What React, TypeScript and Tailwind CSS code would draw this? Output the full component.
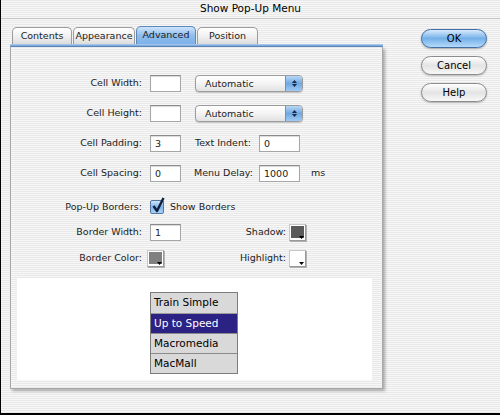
import React from 'react';

// pinstripe background used by the window and the panel
const stripes =
  'bg-[repeating-linear-gradient(180deg,#e9e9e9_0px,#e9e9e9_1px,#f7f7f7_1px,#f7f7f7_2px)]';

const tabs = [
  { label: 'Contents', w: 'w-[60px]' },
  { label: 'Appearance', w: 'w-[62px]' },
  { label: 'Advanced', w: 'w-[60px]', active: true },
  { label: 'Position', w: 'w-[61px]' },
];

const menuItems = ['Train Simple', 'Up to Speed', 'Macromedia', 'MacMall'];

function Field({ value = '', w = 'w-[31px]' }: { value?: string; w?: string }) {
  return (
    <div
      className={`${w} h-[17px] bg-white border border-[#a6a6a6] border-t-[#8a8a8a] shadow-[inset_0_1px_1px_rgba(0,0,0,0.15)] pl-[4px] leading-[15px] text-[9.5px]`}
    >
      {value}
    </div>
  );
}

function Select({ value }: { value: string }) {
  return (
    <div className="w-[108px] h-[17px] flex rounded-[4px] border border-[#9c9c9c] bg-gradient-to-b from-white via-[#f4f4f4] to-[#e2e2e2] shadow-[0_1px_1px_rgba(0,0,0,0.2)] overflow-hidden">
      <div className="flex-1 pl-[9px] leading-[15px]">{value}</div>
      <div className="w-[17px] flex flex-col items-center justify-center gap-[1px] bg-gradient-to-b from-[#b9d8f6] via-[#6ea8e3] to-[#9fcaf3] border-l border-[#6b93c2]">
        <svg width="5" height="3" viewBox="0 0 5 3">
          <path d="M0 3 L2.5 0 L5 3 Z" fill="#1a2a44" />
        </svg>
        <svg width="5" height="3" viewBox="0 0 5 3">
          <path d="M0 0 L2.5 3 L5 0 Z" fill="#1a2a44" />
        </svg>
      </div>
    </div>
  );
}

function Swatch({ color }: { color: string }) {
  return (
    <div className="relative w-[17px] h-[17px] bg-white border border-[#9a9a9a] border-t-[#c8c8c8] border-l-[#c8c8c8] shadow-[1px_1px_0_rgba(0,0,0,0.25)]">
      <div className={`absolute left-[1px] top-[1px] w-[13px] h-[12px] ${color}`} />
      <svg className="absolute right-[1px] bottom-[1px]" width="5" height="3" viewBox="0 0 5 3">
        <path d="M0 0 L2.5 3 L5 0 Z" fill="#000" />
      </svg>
    </div>
  );
}

function Label({ children, w = 'w-[131px]' }: { children: React.ReactNode; w?: string }) {
  return <div className={`${w} text-right shrink-0`}>{children}</div>;
}

function AquaButton({ children, primary }: { children: React.ReactNode; primary?: boolean }) {
  return (
    <div
      className={
        primary
          ? 'w-[66px] h-[19px] rounded-full border border-[#3f6ea6] bg-gradient-to-b from-[#d8ebfc] via-[#74b0e8] to-[#b4dafa] shadow-[0_1px_2px_rgba(0,0,0,0.3)] flex items-center justify-center text-[10px] text-black'
          : 'w-[66px] h-[19px] rounded-full border border-[#8c8c8c] bg-gradient-to-b from-white via-[#e4e4e4] to-[#f7f7f7] shadow-[0_1px_2px_rgba(0,0,0,0.25)] flex items-center justify-center text-[10px] text-black'
      }
    >
      {children}
    </div>
  );
}

export default function App() {
  return (
    <div
      className={`w-[500px] h-[415px] overflow-hidden flex flex-col border-l border-b-2 border-black ${stripes} font-['DejaVu_Sans',sans-serif] text-[9.5px] text-[#1c1c1c]`}
    >
      {/* title bar */}
      <div className="h-[19px] shrink-0 flex items-center justify-center text-[10.5px] text-black border-b border-[#c4c4c4]">
        Show Pop-Up Menu
      </div>

      <div className="flex flex-1">
        {/* tab view */}
        <div className="ml-[9px] mt-[7px] w-[373px] flex flex-col">
          <div className="flex gap-[1px] pl-[2px] h-[18px] items-end">
            {tabs.map((t) => (
              <div
                key={t.label}
                className={
                  t.active
                    ? `${t.w} h-[18px] rounded-t-[5px] border border-b-0 border-[#5b87ba] bg-gradient-to-b from-[#cfe4fb] via-[#8fbdee] to-[#7db1e8] flex items-center justify-center`
                    : `${t.w} h-[17px] rounded-t-[5px] border border-b-0 border-[#9c9c9c] bg-gradient-to-b from-white via-[#f1f1f1] to-[#dcdcdc] flex items-center justify-center`
                }
              >
                {t.label}
              </div>
            ))}
          </div>
          <div className="h-[3px] bg-gradient-to-b from-[#b4d2f0] to-[#6c9ed6] border-b border-[#5c88bb] rounded-[1px]" />

          {/* panel */}
          <div
            className={`h-[342px] flex flex-col border-x border-b border-[#a8a8a8] shadow-[2px_2px_3px_rgba(0,0,0,0.3)] ${stripes} pt-[21px]`}
          >
            <div className="h-[30px] flex items-center">
              <Label>Cell Width:</Label>
              <div className="ml-[8px]">
                <Field />
              </div>
              <div className="ml-[14px]">
                <Select value="Automatic" />
              </div>
            </div>
            <div className="h-[30px] flex items-center">
              <Label>Cell Height:</Label>
              <div className="ml-[8px]">
                <Field />
              </div>
              <div className="ml-[14px]">
                <Select value="Automatic" />
              </div>
            </div>
            <div className="h-[30px] flex items-center">
              <Label>Cell Padding:</Label>
              <div className="ml-[8px]">
                <Field value="3" />
              </div>
              <div className="ml-[14px] w-[64px]">Text Indent:</div>
              <Field value="0" w="w-[41px]" />
            </div>
            <div className="h-[30px] flex items-center">
              <Label>Cell Spacing:</Label>
              <div className="ml-[8px]">
                <Field value="0" />
              </div>
              <div className="ml-[13px] w-[65px]">Menu Delay:</div>
              <Field value="1000" w="w-[41px]" />
              <div className="ml-[11px]">ms</div>
            </div>

            <div className="mt-[6px] h-[26px] flex items-center">
              <Label>Pop-Up Borders:</Label>
              <div className="ml-[8px] relative w-[14px] h-[14px] rounded-[2px] border border-[#51769f] bg-gradient-to-b from-[#cfe4fb] via-[#7fb3e9] to-[#a9d1f7]">
                <svg className="absolute left-[1px] top-[-4px]" width="13" height="16" viewBox="0 0 13 16">
                  <path d="M1.5 9 L5 14 L11.5 1" fill="none" stroke="#0f1f3d" strokeWidth="2.4" strokeLinejoin="round" />
                </svg>
              </div>
              <div className="ml-[6px]">Show Borders</div>
            </div>
            <div className="h-[25px] flex items-center">
              <Label>Border Width:</Label>
              <div className="ml-[8px]">
                <Field value="1" />
              </div>
              <Label w="w-[105px]">Shadow:</Label>
              <div className="ml-[3px]">
                <Swatch color="bg-[#5a5a5a]" />
              </div>
            </div>
            <div className="h-[26px] flex items-center">
              <Label>Border Color:</Label>
              <div className="ml-[5px]">
                <Swatch color="bg-[#808080]" />
              </div>
              <Label w="w-[122px]">Highlight:</Label>
              <div className="ml-[3px]">
                <Swatch color="bg-white" />
              </div>
            </div>

            {/* preview */}
            <div className="mt-[7px] ml-[6px] w-[355px] h-[102px] bg-white pt-[14px] pl-[133px]">
              <div className="w-[88px] border border-[#7c7c7c] bg-[#d9d9d9] text-[10.5px] text-black">
                {menuItems.map((item, i) => (
                  <div
                    key={item}
                    className={
                      i === 1
                        ? 'h-[20px] leading-[19px] pl-[3px] bg-[#2c2284] text-white border-t border-[#9a9a9a]'
                        : i === 0
                        ? 'h-[20px] leading-[19px] pl-[3px]'
                        : 'h-[20px] leading-[19px] pl-[3px] border-t border-[#8a8a8a]'
                    }
                  >
                    {item}
                  </div>
                ))}
              </div>
            </div>
          </div>
        </div>

        {/* buttons */}
        <div className="ml-[38px] mt-[10px] flex flex-col gap-[8px]">
          <AquaButton primary>OK</AquaButton>
          <AquaButton>Cancel</AquaButton>
          <AquaButton>Help</AquaButton>
        </div>
      </div>
    </div>
  );
}
